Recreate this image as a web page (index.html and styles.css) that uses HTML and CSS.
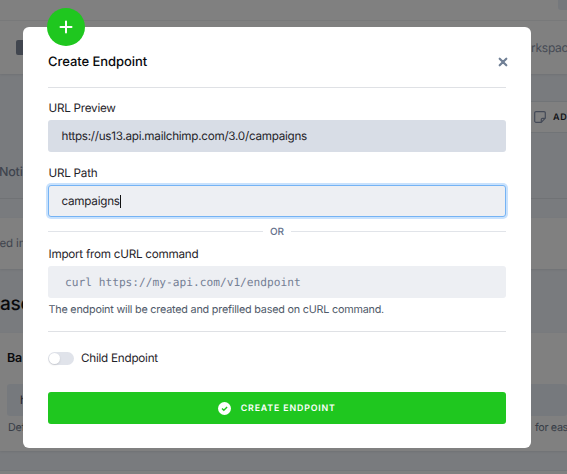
FILE: index.html
```html
<!DOCTYPE html>
<html lang="en">
<head>
<meta charset="utf-8">
<title>Create Endpoint</title>
<link rel="stylesheet" href="styles.css">
</head>
<body>
<div class="page">
  <div class="topbar"><span class="topchip"></span></div>
  <div class="header"><span class="mark"></span><span class="workspace">rkspac</span></div>
  <div class="toolbar"><div class="tool"><svg width="12" height="12" viewBox="0 0 12 12" fill="none" stroke="#444a57" stroke-width="1.2" stroke-linejoin="round"><path d="M2 .6h8a1.3 1.3 0 0 1 1.3 1.3v5.3l-4 4.1H2A1.3 1.3 0 0 1 .7 10V1.9A1.3 1.3 0 0 1 2 .6Z"/><path d="M7.3 11V8.5a1.2 1.2 0 0 1 1.2-1.2h2.6"/></svg><span>AD</span></div></div>
  <div class="tabs">Noti</div>
  <div class="notice">ed in</div>
  <div class="heading">ase</div>
  <div class="panel">
    <div class="panel-title">Ba</div>
    <div class="panel-input">h</div>
    <div class="panel-help"><span>Def</span><span class="help-end">for eas</span></div>
  </div>
  <div class="bottom"></div>
</div>
<main class="modal">
  <div class="badge"><svg width="38" height="38" viewBox="0 0 38 38" stroke="#fff" stroke-width="2" stroke-linecap="round"><path d="M13.5 19h11M19 13.5v11"/></svg></div>
  <header class="modal-head">
    <h1>Create Endpoint</h1>
    <svg class="close" width="10" height="10" viewBox="0 0 10 10" stroke="#718096" stroke-width="2.2" stroke-linecap="round"><path d="M1.7 1.7l6.6 6.6M8.3 1.7L1.7 8.3"/></svg>
  </header>
  <label class="label preview-label">URL Preview</label>
  <div class="field preview">https://us13.api.mailchimp.com/3.0/campaigns</div>
  <label class="label path-label">URL Path</label>
  <div class="field focused">campaigns<i class="caret"></i></div>
  <div class="or"><span>OR</span></div>
  <label class="label curl-label">Import from cURL command</label>
  <div class="field curl">curl https://my-api.com/v1/endpoint</div>
  <p class="help">The endpoint will be created and prefilled based on cURL command.</p>
  <div class="child"><span class="switch"></span><span>Child Endpoint</span></div>
  <div class="submit"><svg width="13" height="13" viewBox="0 0 13 13"><circle cx="6.5" cy="6.5" r="6.5" fill="#fff"/><path d="M4 6.6l1.8 1.7 3.3-3.3" fill="none" stroke="#1fc71f" stroke-width="1.4"/></svg><span>CREATE ENDPOINT</span></div>
</main>
</body>
</html>
```
FILE: styles.css
```css
* { box-sizing: border-box; }
body {
  margin: 0;
  width: 567px;
  height: 474px;
  overflow: hidden;
  position: relative;
  background: #797b7e;
  color: #1f2329;
  font-family: Inter, "Liberation Sans", sans-serif;
  font-size: 11.7px;
  letter-spacing: -0.25px;
  text-rendering: geometricPrecision;
}
.page { height: 474px; display: flex; flex-direction: column; }
.topbar { height: 21px; flex: none; background: #808080; border-bottom: 1px solid #797a7b; display: flex; justify-content: flex-end; }
.topchip { width: 9px; height: 10px; background: #75787c; border-radius: 0 0 0 3px; }
.header { height: 53px; flex: none; background: #808080; display: flex; align-items: center; justify-content: space-between; padding-left: 16px; color: #454a54; box-shadow: 0 1px 2px #00000014; }
.mark { width: 16px; height: 15px; margin-bottom: 1px; background: #41464f; border-radius: 2px; }
.workspace { width: 36px; white-space: nowrap; font-size: 12px; letter-spacing: -0.25px; }
.toolbar { height: 124px; flex: none; padding-top: 27px; display: flex; justify-content: flex-end; align-items: flex-start; }
.tool { width: 47px; height: 32px; background: #808080; border: solid #717477; border-width: 1px 0; display: flex; align-items: center; gap: 7px; padding-left: 14px; color: #101216; font-size: 9px; font-weight: 600; letter-spacing: 0.8px; white-space: nowrap; }
.tool svg { flex: none; }
.tabs { height: 36px; margin-top: -35px; flex: none; border-bottom: 1px solid #707275; color: #3f444e; font-size: 12.5px; font-weight: 500; line-height: 20px; text-indent: -1px; letter-spacing: -0.2px; }
.notice { height: 51px; margin-top: 19px; flex: none; background: #808080; color: #3f444e; font-size: 11.5px; line-height: 51px; text-indent: -0.5px; letter-spacing: -0.15px; box-shadow: 0 1px 2px #00000014; }
.heading { height: 64px; flex: none; color: #090a0c; font-size: 19px; font-weight: 500; line-height: 70px; letter-spacing: -0.3px; }
.panel { height: 118px; flex: none; background: #808080; padding: 0 0 0 7px; box-shadow: 0 1px 2px #00000014; }
.panel-title { height: 51px; line-height: 51px; color: #090a0c; font-size: 12.5px; font-weight: 600; }
.panel-input { height: 32px; background: #76797d; border-radius: 3px; line-height: 32px; padding-left: 13px; }
.panel-help { display: flex; justify-content: space-between; font-size: 10.8px; line-height: 24px; color: #373d47; white-space: nowrap; padding-left: 1px; }
.help-end { width: 32px; letter-spacing: -0.35px; }
.bottom { height: 4px; margin-top: auto; background: #808080; border-top: 1px solid #747679; }
.modal {
  position: absolute;
  left: 23px;
  top: 27px;
  width: 508px;
  height: 421px;
  padding: 0 25px;
  background: #fff;
  border-radius: 6px;
  display: flex;
  flex-direction: column;
}
.modal > * { flex: none; }
.badge { position: absolute; left: 24px; top: -19px; width: 38px; height: 38px; border-radius: 50%; background: #1fc71f; }
.modal-head { height: 61px; border-bottom: 1px solid #dfe1e5; display: flex; align-items: center; justify-content: space-between; padding-top: 9px; }
h1 { margin: 0; color: #080a0d; font-size: 13px; font-weight: 500; line-height: 20px; letter-spacing: -0.05px; }
.close { margin-right: -1.5px; }
.label { line-height: 16px; padding-left: 0.5px; }
.preview-label { margin-top: 12px; }
.path-label { margin-top: 13px; }
.curl-label { margin-top: 7px; }
.field { height: 32px; margin-top: 4px; padding: 0 13.5px; border-radius: 3px; display: flex; align-items: center; background: #edeff3; white-space: nowrap; }
.preview { background: #d8dde6; letter-spacing: -0.27px; }
.focused { border: 1px solid #75b3f4; padding: 0 12.5px; box-shadow: 0 0 0 2px #c9e2fd; }
.caret { width: 1px; height: 13px; background: #111; }
.or { height: 15px; margin-top: 7px; display: flex; align-items: center; gap: 7px; color: #64708a; font-size: 10px; font-weight: 500; letter-spacing: 0; }
.or::before, .or::after { content: ""; flex: 1; height: 1px; background: #e1e4e9; }
.curl { color: #758095; padding-left: 17px; font-family: "DejaVu Sans Mono", monospace; font-size: 11.2px; letter-spacing: 0; }
.help { height: 34px; margin: 0; padding-left: 0.5px; border-bottom: 1px solid #dfe1e5; color: #4f5969; font-size: 10.8px; line-height: 24px; letter-spacing: -0.21px; }
.child { height: 20px; margin-top: 16px; display: flex; align-items: center; gap: 7px; }
.switch { width: 26px; height: 13px; border-radius: 7px; background: #e0e3ea; padding: 1px; }
.switch::before { content: ""; display: block; width: 11px; height: 11px; border-radius: 50%; background: #fff; box-shadow: 0 1px 2px #00000020; }
.submit { height: 32px; margin-top: 24px; border-radius: 3px; background: #1fc71f; color: #fff; display: flex; align-items: center; justify-content: center; gap: 9.5px; font-size: 8.8px; font-weight: 600; letter-spacing: 0.85px; }
```
